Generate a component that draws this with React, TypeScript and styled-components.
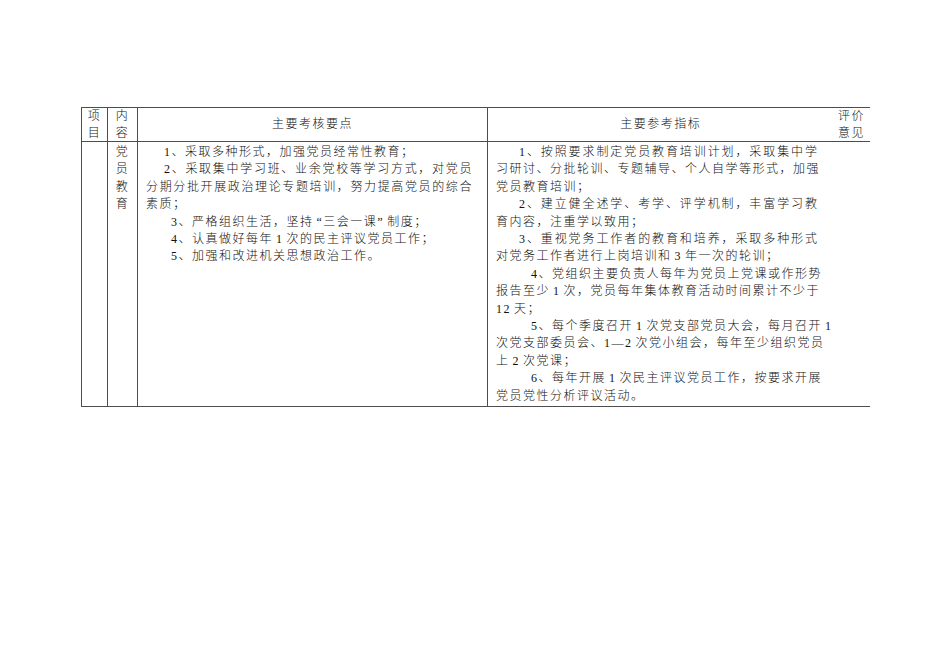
import styled, { createGlobalStyle } from "styled-components";

const GlobalStyle = createGlobalStyle`
  html, body {
    margin: 0;
    padding: 0;
    background: #ffffff;
  }
  body {
    font-family: "Liberation Serif", "Noto Sans CJK SC", serif;
    color: #111;
  }
`;

const Page = styled.div`
  width: 950px;
  height: 672px;
  padding: 107px 0 0 81px;
  box-sizing: border-box;
`;

const Table = styled.table`
  border-collapse: collapse;
  table-layout: fixed;
  width: 788px;
  font-size: 12px;
  font-weight: 300;
  letter-spacing: 1.5px;
  border-top: 1px solid #4d4d4d;
  border-bottom: 1px solid #4d4d4d;
`;

const HeadRow = styled.tr`
  height: 34px;
  border-bottom: 1px solid #4d4d4d;
`;

const BodyRow = styled.tr`
  height: 265px;
`;

interface CellProps {
  $divider?: boolean;
  $left?: boolean;
}

const HeadCell = styled.th<CellProps>`
  font-weight: 300;
  text-align: center;
  vertical-align: middle;
  padding: 0;
  line-height: 16.5px;
  border-left: ${({ $left }) => ($left ? "1px solid #4d4d4d" : "none")};
  border-right: ${({ $divider }) => ($divider ? "1px solid #4d4d4d" : "none")};
`;

const StackCell = styled.td<CellProps>`
  vertical-align: top;
  text-align: center;
  padding: 2px 0 0;
  line-height: 17.4px;
  border-left: ${({ $left }) => ($left ? "1px solid #4d4d4d" : "none")};
  border-right: ${({ $divider }) => ($divider ? "1px solid #4d4d4d" : "none")};
`;

const TextCell = styled.td<CellProps & { $padRight: number }>`
  vertical-align: top;
  padding: 2px ${({ $padRight }) => $padRight}px 0 8px;
  line-height: 17.4px;
  border-right: ${({ $divider }) => ($divider ? "1px solid #4d4d4d" : "none")};
`;

const Line = styled.div<{ $indent?: number; $full?: boolean }>`
  white-space: nowrap;
  word-spacing: -1.5px;
  text-indent: ${({ $indent }) => $indent ?? 0}px;
  text-align: ${({ $full }) => ($full ? "justify" : "left")};
  text-align-last: ${({ $full }) => ($full ? "justify" : "left")};
`;

type Para = { indent: number; lines: string[] };

const points: Para[] = [
  { indent: 18, lines: ["1、采取多种形式，加强党员经常性教育；"] },
  {
    indent: 18,
    lines: [
      "2、采取集中学习班、业余党校等学习方式，对党员",
      "分期分批开展政治理论专题培训，努力提高党员的综合",
      "素质；",
    ],
  },
  { indent: 25, lines: ["3、严格组织生活，坚持 “三会一课” 制度；"] },
  { indent: 25, lines: ["4、认真做好每年 1 次的民主评议党员工作；"] },
  { indent: 25, lines: ["5、加强和改进机关思想政治工作。"] },
];

const indicators: Para[] = [
  {
    indent: 23,
    lines: [
      "1、按照要求制定党员教育培训计划，采取集中学",
      "习研讨、分批轮训、专题辅导、个人自学等形式，加强",
      "党员教育培训；",
    ],
  },
  {
    indent: 23,
    lines: ["2、建立健全述学、考学、评学机制，丰富学习教", "育内容，注重学以致用；"],
  },
  {
    indent: 23,
    lines: ["3、重视党务工作者的教育和培养，采取多种形式", "对党务工作者进行上岗培训和 3 年一次的轮训；"],
  },
  {
    indent: 35,
    lines: [
      "4、党组织主要负责人每年为党员上党课或作形势",
      "报告至少 1 次，党员每年集体教育活动时间累计不少于",
      "12 天；",
    ],
  },
  {
    indent: 35,
    lines: [
      "5、每个季度召开 1 次党支部党员大会，每月召开 1",
      "次党支部委员会、1—2 次党小组会，每年至少组织党员",
      "上 2 次党课；",
    ],
  },
  {
    indent: 35,
    lines: ["6、每年开展 1 次民主评议党员工作，按要求开展", "党员党性分析评议活动。"],
  },
];

const renderParas = (paras: Para[]) =>
  paras.map((p, pi) =>
    p.lines.map((text, li) => (
      <Line
        key={`${pi}-${li}`}
        $indent={li === 0 ? p.indent : 0}
        $full={li < p.lines.length - 1}
      >
        {text}
      </Line>
    ))
  );

const App = () => {
  return (
    <>
      <GlobalStyle />
      <Page>
        <Table>
          <colgroup>
            <col style={{ width: 26 }} />
            <col style={{ width: 30 }} />
            <col style={{ width: 350 }} />
            <col style={{ width: 346 }} />
            <col style={{ width: 36 }} />
          </colgroup>
          <thead>
            <HeadRow>
              <HeadCell $left $divider>
                项<br />目
              </HeadCell>
              <HeadCell $divider>
                内<br />容
              </HeadCell>
              <HeadCell $divider>主要考核要点</HeadCell>
              <HeadCell>主要参考指标</HeadCell>
              <HeadCell>
                评价<br />意见
              </HeadCell>
            </HeadRow>
          </thead>
          <tbody>
            <BodyRow>
              <StackCell $left $divider />
              <StackCell $divider>
                党<br />员<br />教<br />育
              </StackCell>
              <TextCell $divider $padRight={14}>
                {renderParas(points)}
              </TextCell>
              <TextCell $padRight={15}>{renderParas(indicators)}</TextCell>
              <StackCell />
            </BodyRow>
          </tbody>
        </Table>
      </Page>
    </>
  );
};

export default App;
